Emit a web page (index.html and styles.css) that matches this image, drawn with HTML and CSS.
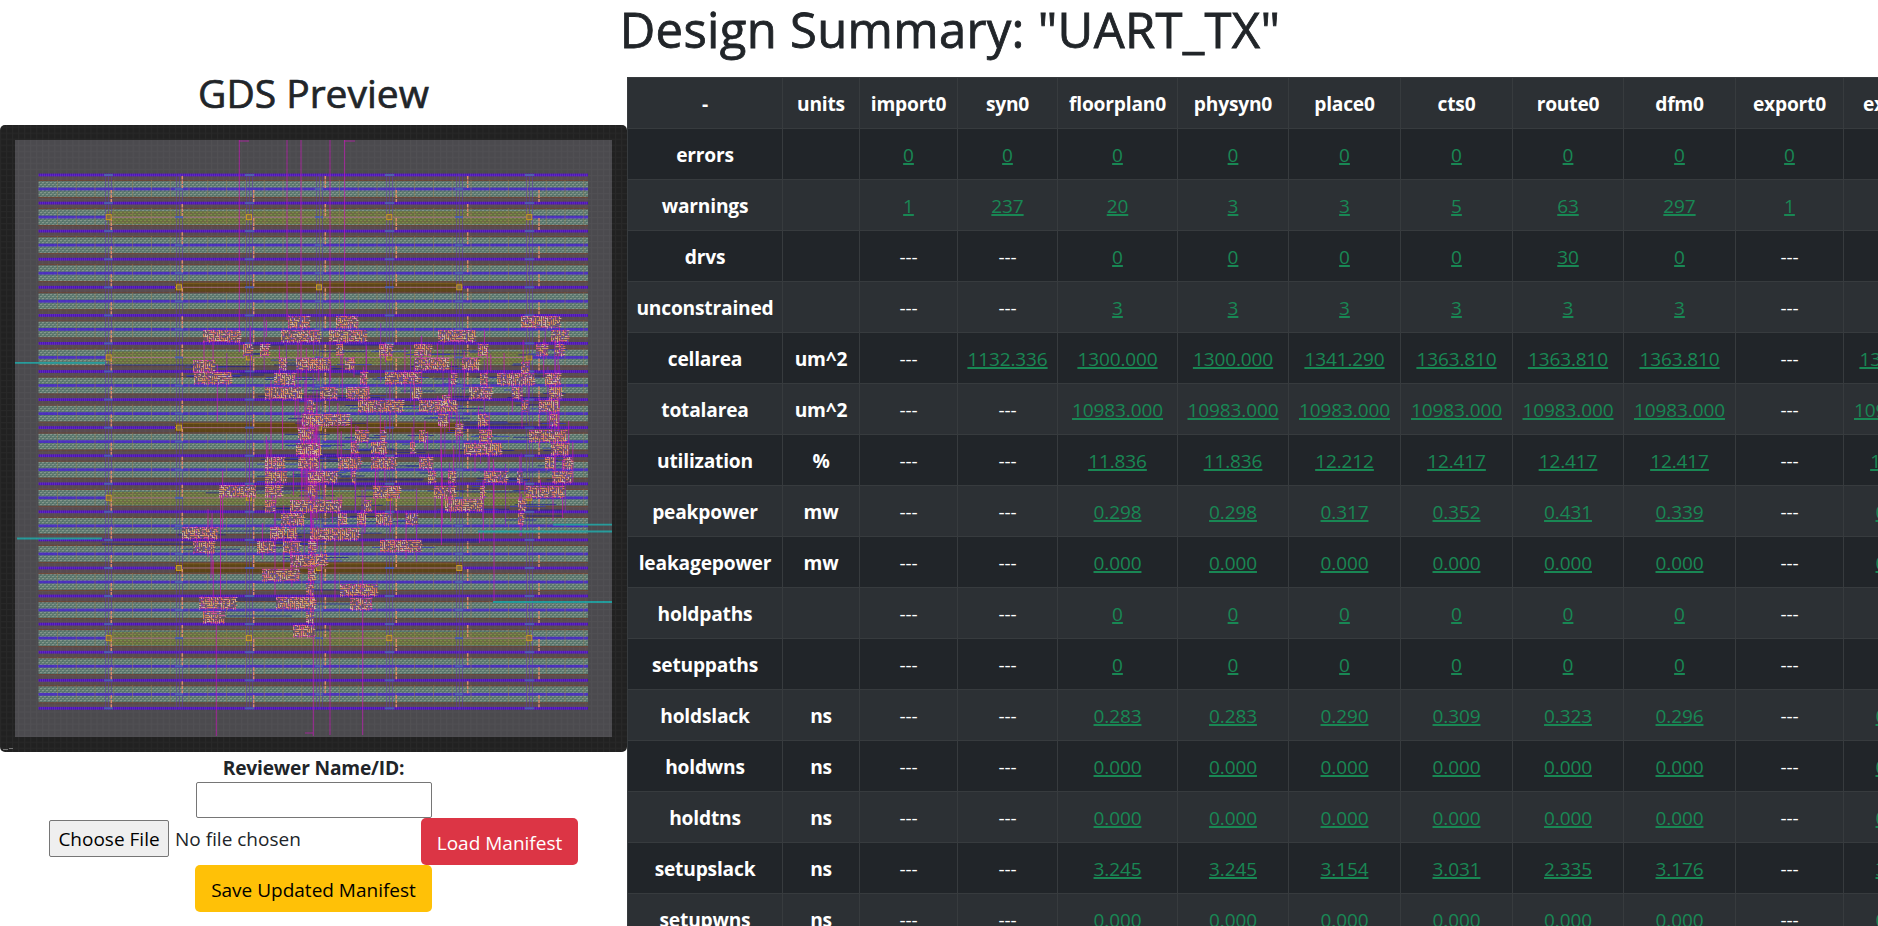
FILE: index.html
```html
<!DOCTYPE html>
<html lang="en">
<head>
<meta charset="utf-8">
<title>Design Summary</title>
<link rel="stylesheet" href="styles.css">
</head>
<body>
<h1 class="title">Design Summary: "UART_TX"</h1>
<main class="layout">
  <section class="preview">
    <h2 class="subtitle">GDS Preview</h2>
    <svg class="gds" viewBox="0 125 627 627" width="627" height="627" role="img" aria-label="Chip layout">
      <defs>
        <pattern id="grid" width="6.03" height="6.03" patternUnits="userSpaceOnUse"><path d="M0 .5H7M.5 0V7" stroke="#fff" stroke-opacity=".03"/></pattern>
        <pattern id="band" width="4" height="4" patternUnits="userSpaceOnUse"><rect width="4" height="4" fill="#5f7a70"/><path d="M0 .5H2M2 2.5H4" stroke="#82958a"/><path d="M2.5 1V2M.5 3V4" stroke="#4d6e69"/></pattern>
        <pattern id="olive" width="4" height="4" patternUnits="userSpaceOnUse"><rect width="4" height="4" fill="#66703f"/><path d="M0 .5H2M2 2.5H4" stroke="#7d8849"/><path d="M2 1.5H4" stroke="#735f4a"/></pattern>
        <pattern id="rail" width="2" height="3" patternUnits="userSpaceOnUse"><rect width="2" height="3" fill="#4b14b4"/><path d="M.5 0V3" stroke="#5d24c2"/></pattern>
      </defs>
      <rect y="125" width="627" height="627" fill="#212121"/>
      <rect x="15" y="140" width="597" height="597" fill="#4b4a4e"/>
      <g id="rows"></g>
      <g id="wires" fill="none"></g>
      <g id="cells" fill="none"></g>
      <rect y="125" width="627" height="627" fill="url(#grid)"/>
      <path d="M3 749.5H8M9 748.5H13" stroke="#777"/>
    </svg>
    <form class="form">
      <label class="label" for="reviewer">Reviewer Name/ID:</label>
      <input class="field" id="reviewer" type="text">
      <div class="file-row">
        <div class="file"><button class="choose" type="button">Choose File</button><span class="chosen">No file chosen</span></div>
        <button class="btn load" type="button">Load Manifest</button>
      </div>
      <button class="btn save" type="button">Save Updated Manifest</button>
    </form>
  </section>
  <table class="metrics">
    <colgroup><col class="w155"><col class="w77"><col class="w98"><col class="w100"><col class="w120"><col class="w111"><col class="w112"><col class="w112"><col class="w111"><col class="w112"><col class="w108"><col class="w112"></colgroup>
    <thead id="head"></thead>
    <tbody id="body"></tbody>
  </table>
</main>
<script src="app.js"></script>
</body>
</html>
```
FILE: styles.css
```css
* { box-sizing: border-box; }
body {
  margin: 0;
  height: 926px;
  overflow: hidden;
  background: #fff;
  color: #212529;
  font: 19px/30px "Open Sans", "Noto Sans", sans-serif;
}
.title {
  margin: 0;
  height: 77px;
  font-size: 49px;
  line-height: 58px;
  font-weight: 500;
  text-align: center;
  letter-spacing: .3px;
  padding-left: 22px;
  -webkit-text-stroke: .8px #212529;
}
.layout { display: flex; align-items: flex-start; }
.preview { width: 627px; flex: none; }
.subtitle {
  margin: -8px 0 8px;
  font-size: 39px;
  line-height: 48px;
  font-weight: 500;
  text-align: center;
  -webkit-text-stroke: .7px #212529;
}
.gds { display: block; border-radius: 5px; }
.form { display: flex; flex-direction: column; align-items: center; }
.label { padding-top: 1px; height: 30px; font-weight: 700; font-size: 19.2px; letter-spacing: -.2px; }
.field {
  width: 236px;
  height: 36px;
  border: 1px solid #767676;
  border-radius: 2px;
  padding: 1px 2px;
}
.file-row { display: flex; width: 529px; justify-content: space-between; }
.file { display: flex; align-items: center; height: 41px; gap: 6px; }
.choose {
  width: 120px;
  height: 37px;
  padding: 1px 0 0;
  border: 1px solid #767676;
  border-radius: 2px;
  background: #efefef;
  color: #000;
  font: inherit;
}
.btn {
  height: 47px;
  padding: 2px 0 0;
  border: 0;
  border-radius: 5px;
  font: inherit;
}
.load { width: 157px; background: #dc3545; color: #fff; }
.save { width: 237px; background: #ffc107; color: #000; }

.metrics {
  flex: none;
  width: 1329px;
  table-layout: fixed;
  border-collapse: collapse;
  background: #212529;
  color: #fff;
  text-align: center;
}
.w77 { width: 77px; }
.w98 { width: 98px; }
.w100 { width: 100px; }
.w108 { width: 108px; }
.w111 { width: 111px; }
.w112 { width: 112px; }
.w120 { width: 120px; }
.w155 { width: 155px; }
.metrics th, .metrics td {
  height: 51px;
  padding: 11px 0 9px;
  border: 1px solid #373b3e;
  white-space: nowrap;
}
.metrics th { font-weight: 700; font-size: 19.2px; letter-spacing: -.2px; }
.metrics td { letter-spacing: -.1px; }
.metrics tr.alt { background: #2c3034; }
.metrics a {
  color: #198754;
  text-decoration: underline;
  text-decoration-thickness: 2px;
  text-underline-offset: 1px;
}
```
FILE: app.js
```js
// Metrics table
const head = ['-', 'units', 'import0', 'syn0', 'floorplan0', 'physyn0', 'place0', 'cts0', 'route0', 'dfm0', 'export0', 'export1'];
const data = [
  'errors||0|0|0|0|0|0|0|0|0|0',
  'warnings||1|237|20|3|3|5|63|297|1|0',
  'drvs||---|---|0|0|0|0|30|0|---|0',
  'unconstrained||---|---|3|3|3|3|3|3|---|3',
  'cellarea|um^2|---|1132.336|1300.000|1300.000|1341.290|1363.810|1363.810|1363.810|---|1363.810',
  'totalarea|um^2|---|---|10983.000|10983.000|10983.000|10983.000|10983.000|10983.000|---|10983.000',
  'utilization|%|---|---|11.836|11.836|12.212|12.417|12.417|12.417|---|12.417',
  'peakpower|mw|---|---|0.298|0.298|0.317|0.352|0.431|0.339|---|0.339',
  'leakagepower|mw|---|---|0.000|0.000|0.000|0.000|0.000|0.000|---|0.000',
  'holdpaths||---|---|0|0|0|0|0|0|---|0',
  'setuppaths||---|---|0|0|0|0|0|0|---|0',
  'holdslack|ns|---|---|0.283|0.283|0.290|0.309|0.323|0.296|---|0.296',
  'holdwns|ns|---|---|0.000|0.000|0.000|0.000|0.000|0.000|---|0.000',
  'holdtns|ns|---|---|0.000|0.000|0.000|0.000|0.000|0.000|---|0.000',
  'setupslack|ns|---|---|3.245|3.245|3.154|3.031|2.335|3.176|---|3.176',
  'setupwns|ns|---|---|0.000|0.000|0.000|0.000|0.000|0.000|---|0.000'
];
document.getElementById('head').innerHTML = '<tr class="alt">' + head.map(h => `<th>${h}</th>`).join('') + '</tr>';
document.getElementById('body').innerHTML = data.map((row, r) =>
  `<tr class="${r % 2 ? 'alt' : ''}">` + row.split('|').map((v, c) =>
    c < 2 ? `<th>${v}</th>` : `<td>${v === '---' ? v : `<a>${v}</a>`}</td>`).join('') + '</tr>').join('');

// Chip layout: power rails, straps and standard-cell rows
const P = 28.07, Y0 = 175, X0 = 38.5, X1 = 588;
let s = `<rect x="${X0}" y="174" width="${X1 - X0}" height="535" fill="#584b4f"/>`;
const rect = (x, y, w, h, f, o = 1) => { s += `<rect x="${x}" y="${y.toFixed(1)}" width="${w}" height="${h}" fill="${f}" opacity="${o}"/>`; };
for (let k = 0; k < 19; k++) {
  const y = Y0 + k * P;
  rect(X0, y + 5, X1 - X0, 1, '#6b4536');
  rect(X0, y + 22, X1 - X0, 1, '#6b4536');
  rect(X0, y + 6.2, X1 - X0, 15.6, 'url(#band)');
  rect(X0, y + 12.6, X1 - X0, 2.8, '#4a30bd');
  if (k % 5 === 1) {
    rect(107, y + 8, 424, 13, 'url(#olive)');
    rect(107, y + 13.6, 424, 1, '#a0708a');
  }
}
for (let k = 0; k < 20; k++) {
  const y = Y0 + k * P;
  rect(X0, y - 1.4, X1 - X0, 2.8, 'url(#rail)');
  if (k % 5 === 4 && k < 19) {
    rect(175, y - 4.5, 288, 9, '#5c4417');
    rect(175, y - .5, 288, 1, '#a06a80');
    rect(175, y - 4.5, 288, .7, '#8b661c');
  }
}
[108, 179, 249, 319, 389, 459, 529].forEach((x, i) => {
  for (const d of [-3, 0, 3]) rect(x + d, 174, .8, 535, '#6035a8', .65);
  for (let k = 0; k < 20; k++) {
    if (i % 2 === 0) rect(x - 4, Y0 + k * P - 1, 9, 2, '#4a5cad');
    else if (k < 19) rect(x - 4, Y0 + k * P + 13, 8, 2, '#4a5cad');
  }
});
for (let k = 0; k < 19; k++) {
  for (let x = 57; x < 588; x += 18.8) rect(x.toFixed(1), Y0 + k * P + 5, .8, 17, '#937c50', .6);
  [111.3, 182.3, 253.7, 325.3, 396.3, 467.7, 539].forEach((x, i) => {
    s += `<path d="M${x} ${Y0 + k * P + (i % 2 ? 1 : 15)}v12" stroke="#d98a68" stroke-width="1.5" stroke-dasharray="3.5 1"/>`;
  });
}
const square = (x, y) => { s += `<rect x="${x - 2.5}" y="${(y - 2.5).toFixed(1)}" width="5" height="5" fill="#7d6a44" stroke="#c9981f"/>`; };
for (const k of [1, 6, 11, 16]) for (const x of [108.7, 249, 389.3, 529.3]) square(x, Y0 + k * P + 14);
for (const k of [4, 9, 14]) for (const x of [179, 319, 459.3]) square(x, Y0 + k * P);
document.getElementById('rows').innerHTML = s;

// Deterministic generator for routing detail
let seed = 7;
const rnd = () => (seed = (seed * 16807) % 2147483647) / 2147483647;

const cells = `288,316,22 203,330,38 281,330,39 243,344,10 260,344,9 193,360,22 296,358,24 279,358,8 194,372,38 274,373,22
265,387,37 307,400,7 302,414,18 298,428,16 336,316,22 329,330,38 336,344,7 379,344,13 414,344,18 478,344,9
438,330,38 521,316,39 551,330,18 536,344,12 555,344,9 415,358,34 345,358,10 462,358,17 310,358,20 521,362,8
360,372,7 385,372,35 451,373,5 480,373,8 497,373,38 545,373,16 320,387,18 346,387,24 412,387,10 442,395,8
469,387,23 512,387,9 549,387,13 358,400,45 419,400,38 522,400,6 539,400,20 438,414,10 310,414,39 478,414,10
550,414,8 455,424,8 355,430,14 380,430,5 419,430,7 479,430,13 529,430,37 314,444,7 351,442,7 371,442,16
410,442,5 464,443,38 551,443,18 338,457,23 371,457,25 419,457,14 545,457,10 563,457,10 310,471,28 352,471,4
428,471,8 448,471,8 484,471,23 517,471,6 552,471,20 373,486,27 434,486,21 480,486,5 526,486,37 310,500,31
364,500,8 445,499,38 518,499,8 338,513,9 357,513,9 376,513,16 406,513,12 518,513,6 310,528,49 380,540,42
310,554,17 340,584,38 350,598,22 310,598,5 296,443,22 298,457,20 265,457,20 265,471,22 219,485,37 265,485,17
290,500,24 265,500,10 281,513,23 182,527,36 270,527,15 287,527,10 193,541,22 257,541,17 283,541,17 290,555,28
262,569,38 199,597,37 276,597,38 203,611,22 293,625,22 308,471,8 308,485,8 308,541,8 308,569,7 306,583,8 306,611,8`
  .trim().split(/\s+/).map(c => c.split(',').map(Number));

// Horizontal and vertical wires
const wires = { '#1b1b96': '', '#3038c8': '', '#c514b8': '', '#8a22c0': '', '#239a9a': '' };
const h = (c, x, y, w) => { wires[c] += `M${x.toFixed(1)} ${y.toFixed(1)}h${w.toFixed(1)}`; };
const v = (c, x, y, l) => { wires[c] += `M${x.toFixed(1)} ${y.toFixed(1)}v${l.toFixed(1)}`; };
for (const [x, y, w] of cells) {
  if (y < 340 || y > 560) continue;
  h('#1b1b96', x - rnd() * 18, y + 2 + rnd() * 9, Math.min(w + rnd() * 42, 574 - x));
  if (rnd() > .4) h('#3038c8', x - 8, y + rnd() * 11, Math.min(w + rnd() * 34, 574 - x));
  v('#c514b8', x + rnd() * w, y - rnd() * 34, 14 + rnd() * 48);
  if (rnd() > .35) v('#8a22c0', x + rnd() * w, y - rnd() * 30, 20 + rnd() * 44);
}
[[105, 365, 90], [102, 544, 92], [240, 373, 34], [232, 375, 32], [250, 345, 34], [343, 345, 40], [256, 488, 50], [327, 486, 45], [313, 457, 40],
 [218, 531, 66], [236, 598, 42], [236, 600, 44], [226, 616, 66], [313, 590, 27], [314, 604, 42], [312, 630, 18], [422, 540, 57], [422, 542, 57],
 [526, 510, 36], [526, 516, 36], [464, 424, 64], [464, 427, 90], [315, 480, 108], [354, 479, 70], [390, 450, 50], [460, 492, 60], [480, 472, 70]]
  .forEach(([x, y, w]) => h('#1b1b96', x, y, w));
[[239.3, 140, 212], [287, 140, 180], [301, 140, 240], [330, 140, 230], [344.6, 140, 180], [216.3, 620, 116], [213.3, 560, 60], [313.3, 520, 216],
 [311.3, 420, 200], [330, 625, 110], [362.7, 540, 195], [204, 340, 22], [220.5, 495, 110], [271, 380, 100], [282.5, 390, 60], [335, 535, 66],
 [441.5, 450, 95], [479.5, 530, 13], [494, 465, 137], [553, 485, 36], [562.6, 460, 58], [298, 340, 90], [305, 380, 120], [317, 390, 130], [275, 500, 95],
 [555, 340, 130], [558, 350, 100]]
  .forEach(([x, y, l]) => v('#c514b8', x, y, l));
for (let i = 0; i < 16; i++) v('#c514b8', 299 + rnd() * 18, 395 + rnd() * 60, 25 + rnd() * 65);
h('#c514b8', 239, 141, 10); h('#c514b8', 344, 141, 11); h('#c514b8', 305, 733, 8);
[[15, 362.8, 90], [17, 538.5, 85], [553, 524.6, 59], [478, 531.5, 134], [493, 602, 119]].forEach(([x, y, w]) => h('#239a9a', x, y, w));
document.getElementById('wires').innerHTML = Object.entries(wires).map(([c, d]) =>
  `<path d="${d}" stroke="${c}" stroke-width="${c === '#239a9a' ? 1.8 : .9}" opacity="${c === '#239a9a' ? 1 : .78}"/>`).join('');

// Standard cells: short strokes inside each outline
const inks = ['#e7bba0', '#ef8265', '#d8569a', '#c8b46a', '#e4a04c', '#5a48b8', '#d7c6b0', '#5a4a60', '#e07a50'];
const strokes = inks.map(() => '');
let base = '', edge = '';
for (const [x, y, w] of cells) {
  base += `M${x} ${y}h${w}v12h${-w}z`;
  edge += `M${x} ${y + .5}h${w}M${x} ${y + 11.5}h${w}`;
  for (let j = 0; j < 12; j += 2) {
    for (let i = 0; i < w; i += 2) {
      const n = Math.floor(rnd() * inks.length);
      strokes[n] += rnd() > .5 ? `M${x + i} ${y + j + .5}h2.4` : `M${x + i + .5} ${y + j}v2.6`;
    }
  }
  if (rnd() > .4) edge += `M${(x + rnd() * w).toFixed(1)} ${y - 1}v14`;
}
document.getElementById('cells').innerHTML = `<path d="${base}" fill="#7d5068" opacity=".7"/>` +
  strokes.map((d, i) => `<path d="${d}" stroke="${inks[i]}" stroke-width=".95" opacity=".85"/>`).join('') +
  `<path d="${edge}" stroke="#c928b0" stroke-dasharray="2 1.5" opacity=".7"/>`;
```
